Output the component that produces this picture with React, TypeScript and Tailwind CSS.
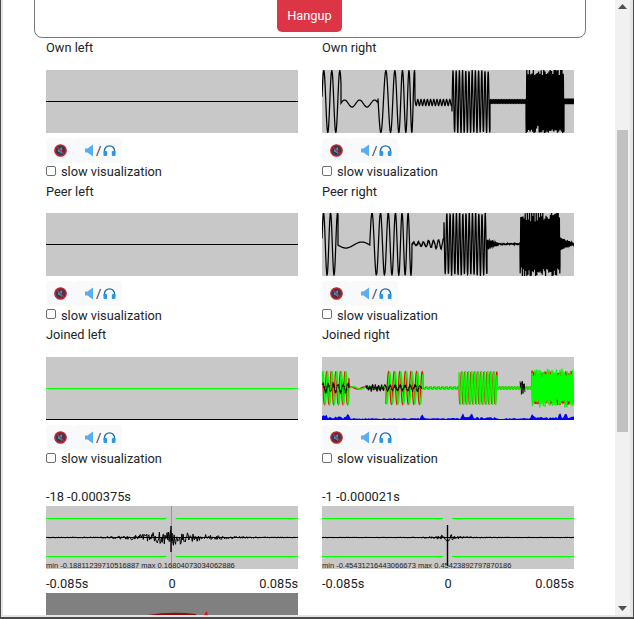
import type { ReactNode } from 'react'

type Seg = { from: number; to: number; amp: number; period: number; mid?: number; noise?: number; endAmp?: number; endPeriod?: number; reset?: boolean }

function rng(seed: number) {
  let s = seed
  return () => {
    s = (s * 16807) % 2147483647
    return s / 2147483647
  }
}

// sample the segments into a polyline, like the canvas does
function wave(segs: Seg[], center: number, seed: number, startPhase = 0, step = 0.2) {
  const r = rng(seed)
  const pts: string[] = []
  let phase = startPhase
  for (const seg of segs) {
    if (seg.reset) phase = 0
    for (let x = seg.from; x < seg.to; x += step) {
      const t = (x - seg.from) / (seg.to - seg.from)
      const period = seg.period + ((seg.endPeriod ?? seg.period) - seg.period) * t
      const amp = seg.amp + ((seg.endAmp ?? seg.amp) - seg.amp) * t
      phase += (step / period) * Math.PI * 2
      const n = seg.noise ? (r() - 0.5) * seg.noise : 0
      const y = center + (seg.mid ?? 0) - Math.sin(phase) * amp + n
      pts.push(`${x.toFixed(1)},${y.toFixed(1)}`)
    }
  }
  return pts.join(' ')
}

const ownRight: Seg[] = [
  { from: 0, to: 19, amp: 31, period: 8 },
  { from: 19, to: 56, amp: 3.5, period: 15, mid: 2, reset: true },
  { from: 56, to: 93, amp: 31, period: 11, endPeriod: 5 },
  { from: 93, to: 130, amp: 3, period: 3.2, mid: 1 },
  { from: 130, to: 168, amp: 31, period: 3.2, noise: 2 },
  { from: 168, to: 204, amp: 2, period: 1.6 },
  { from: 204, to: 242, amp: 31, period: 1.3, noise: 8 },
  { from: 242, to: 252, amp: 3, period: 0.5 },
]

const peerRight: Seg[] = [
  { from: 0, to: 16, amp: 31, period: 7 },
  { from: 16, to: 48, amp: -3, period: 32, mid: 1, reset: true },
  { from: 48, to: 90, amp: 31, period: 9, endPeriod: 5.5, noise: 1, reset: true },
  { from: 90, to: 122, amp: 1, period: 5, endAmp: 5, noise: 1.5 },
  { from: 122, to: 165, amp: 31, period: 3.2, noise: 3 },
  { from: 165, to: 176, amp: 5, endAmp: 1, period: 1.6, noise: 2 },
  { from: 176, to: 198, amp: 0.3, period: 4, noise: 0.8 },
  { from: 198, to: 238, amp: 31, period: 1.1, noise: 12 },
  { from: 238, to: 252, amp: 6, endAmp: 0.5, period: 1.4, noise: 1 },
]

const joined = (a: number, b: number, c: number, d: number, n: number): Seg[] => [
  { from: 0, to: 27, amp: a, period: 4.6 },
  { from: 27, to: 64, amp: b, period: 14 },
  { from: 64, to: 101, amp: a, period: 5.6 },
  { from: 101, to: 137, amp: b, period: 4 },
  { from: 137, to: 175, amp: a, period: c },
  { from: 175, to: 210, amp: b, period: 3 },
  { from: 210, to: 251, amp: a, period: d, noise: n },
]

const blackLow: Seg[] = [{ from: 0, to: 27, amp: 4, period: 5, noise: 4 }]
const blackHigh: Seg[] = [
  { from: 44, to: 62, amp: 1.5, period: 3, noise: 5 },
  { from: 62, to: 100, amp: 2.5, period: 5, noise: 3 },
]
const blackBlip: Seg[] = [{ from: 198, to: 203, amp: 2, period: 2, noise: 11 }]

function blueFill() {
  const r = rng(77)
  const pts = ['0,63']
  for (let x = 0; x <= 252; x += 1.5) {
    const spike = [1, 4, 26, 100, 141, 150, 210, 238, 244].reduce((h, s) => Math.max(h, 4.5 - Math.abs(x - s) * 2), 0)
    const zone = x < 30 || (x > 137 && x < 175) || x > 210 ? 2.5 : 1
    pts.push(`${x},${(62 - r() * zone - spike).toFixed(1)}`)
  }
  pts.push('252,63')
  return pts.join(' ')
}

function xcorr(spread: number, amp: number, seed: number, at: number) {
  const r = rng(seed)
  const pts: string[] = []
  for (let x = 0; x <= 252; x += 0.7) {
    const d = Math.abs(x - at)
    const a = amp * Math.exp(-d / spread) + 0.2
    pts.push(`${x.toFixed(1)},${(31.5 - (r() - 0.5) * 2 * a).toFixed(1)}`)
  }
  return pts.join(' ')
}

function Scope({ children }: { children?: ReactNode }) {
  return (
    <svg width="252" height="63" viewBox="0 0 252 63" className="block bg-[#c8c8c8]">
      {children}
    </svg>
  )
}

function Line({ y, color = '#000' }: { y: number; color?: string }) {
  return <line x1="0" x2="252" y1={y} y2={y} stroke={color} strokeWidth="1" />
}

function AudioButtons() {
  return (
    <div className="mt-[5px] flex h-[25px]">
      <button className="flex w-[28px] items-center justify-center rounded-[4px] bg-[#f8f9fa]">
        <svg width="13" height="13" viewBox="0 0 13 13">
          <circle cx="6.5" cy="6.5" r="5.7" fill="#3b3b46" stroke="#d0232f" strokeWidth="1.3" />
          <path d="M4 5h1.4L8 3v7L5.4 8H4z" fill="#3f8fd8" />
          <line x1="2.5" y1="2.5" x2="10.5" y2="10.5" stroke="#d0232f" strokeWidth="1.2" />
        </svg>
      </button>
      <button className="flex w-[48px] items-center pl-[11px] rounded-[4px] bg-[#f8f9fa]">
        <svg width="8" height="13" viewBox="0 0 8 13">
          <path d="M0 4.5h2.5L8 .5v12L2.5 8.5H0z" fill="#5aaef0" />
        </svg>
        <span className="ml-[3px] mr-[2px] text-[13px] leading-none text-[#333]">/</span>
        <svg width="13" height="13" viewBox="0 0 14 13">
          <path d="M1.5 9V7a5.5 5.5 0 0 1 11 0v2" fill="none" stroke="#1d6fa8" strokeWidth="1.5" />
          <rect x="0.5" y="7" width="4" height="5.5" rx="1.2" fill="#2f97e0" />
          <rect x="9.5" y="7" width="4" height="5.5" rx="1.2" fill="#2f97e0" />
        </svg>
      </button>
    </div>
  )
}

function Channel({ title, children }: { title: string; children: ReactNode }) {
  return (
    <div>
      <div className="h-[19.4px] pt-[0.4px] leading-[19px]">{title}</div>
      <div className="mt-[12.6px]">{children}</div>
      <AudioButtons />
      <label className="flex h-[18.5px] items-center">
        <input type="checkbox" className="mb-[3px] h-[10px] w-[10px] appearance-none rounded-[2px] border border-[#6f6f6f] bg-white" />
        <span className="ml-[5px]">slow visualization</span>
      </label>
    </div>
  )
}

function Correlation({ title, info, at, spread, amp, seed, marker }: { title: string; info: string; at: number; spread: number; amp: number; seed: number; marker?: boolean }) {
  const gapA = at - 5
  const gapB = at + 4
  return (
    <div>
      <div className="h-[19px] leading-[19px]">{title}</div>
      <div className="relative h-[63px] w-[252px] overflow-hidden">
        <Scope>
          <line x1="0" x2={gapA} y1="12.5" y2="12.5" stroke="#00ff00" strokeWidth="1.2" />
          <line x1={gapB} x2="252" y1="12.5" y2="12.5" stroke="#00ff00" strokeWidth="1.2" />
          <line x1="0" x2={gapA} y1="50.5" y2="50.5" stroke="#00ff00" strokeWidth="1.2" />
          <line x1={gapB} x2="252" y1="50.5" y2="50.5" stroke="#00ff00" strokeWidth="1.2" />
          {marker && <line x1={at} x2={at} y1="0" y2="63" stroke="#00ff00" />}
          <Line y={31.5} />
          <polyline points={xcorr(spread, amp, seed, at)} fill="none" stroke="#000" strokeWidth="1" />
          <line x1={at - 0.5} x2={at - 0.5} y1={marker ? 20 : 19} y2={marker ? 46 : 60} stroke="#000" strokeWidth="1.4" />
        </Scope>
        <div className="absolute bottom-[-1px] left-0 whitespace-nowrap font-['Liberation_Sans',sans-serif] text-[7.5px] leading-[9px] text-[#222]">{info}</div>
      </div>
      <div className="mt-[5px] grid h-[19px] grid-cols-3 leading-[19px]">
        <span>-0.085s</span>
        <span className="text-center">0</span>
        <span className="text-right">0.085s</span>
      </div>
    </div>
  )
}

export default function App() {
  return (
    <div className="flex h-[619px] w-[634px] overflow-hidden border-x border-b-2 border-[#4a4a4a] bg-white font-['Roboto',sans-serif] text-[12.8px] text-[#212529]">
      <div className="flex min-w-0 flex-1 border-b-2 border-l-2 border-r-[3px] border-[#e6e6e6]">
        <main className="min-w-0 flex-1 overflow-hidden">
          <div className="ml-[31px] mr-[29px] mt-[-10px] flex h-[48px] justify-center rounded-b-[8px] border border-[#777] bg-white">
            <button className="mr-[1px] h-[41px] w-[65px] rounded-[5px] bg-[#dc3545] pt-[9px] text-white">Hangup</button>
          </div>
          <div className="ml-[43px] mt-[-0.2px] grid w-[528px] grid-cols-[252px_252px] gap-x-[24px]">
            <Channel title="Own left">
              <Scope><Line y={31.5} /></Scope>
            </Channel>
            <Channel title="Own right">
              <Scope>
                <polyline points={wave(ownRight, 31.5, 11)} fill="none" stroke="#000" strokeWidth="1.25" />
              </Scope>
            </Channel>
            <Channel title="Peer left">
              <Scope><Line y={31.5} /></Scope>
            </Channel>
            <Channel title="Peer right">
              <Scope>
                <polyline points={wave(peerRight, 31, 23)} fill="none" stroke="#000" strokeWidth="1.25" />
              </Scope>
            </Channel>
            <Channel title="Joined left">
              <Scope>
                <Line y={31.5} color="#00ff00" />
                <Line y={62.5} />
              </Scope>
            </Channel>
            <Channel title="Joined right">
              <Scope>
                <polyline points={blueFill()} fill="#0000ff" />
                <polyline points={wave(joined(16, 1, 3.2, 1.3, 3), 31, 37, 1.2)} fill="none" stroke="#ff0000" strokeWidth="1.4" />
                <polyline points={wave(joined(16, 1.2, 3.2, 0.9, 8), 31, 41)} fill="none" stroke="#00ff00" strokeWidth="1.4" />
                <polyline points={wave(blackLow, 31, 31)} fill="none" stroke="#000" strokeWidth="0.7" />
                <polyline points={wave(blackHigh, 31, 43)} fill="none" stroke="#000" strokeWidth="0.8" />
                <polyline points={wave(blackBlip, 31, 47)} fill="none" stroke="#000" strokeWidth="0.8" />
              </Scope>
            </Channel>
            <div className="col-span-2 h-[18.5px]" />
            <Correlation title="-18 -0.000375s" info="min -0.18811239710516887 max 0.16804073034062886" at={125.5} spread={28} amp={9} seed={5} marker />
            <Correlation title="-1 -0.000021s" info="min -0.45431216443066673 max 0.45423892797870186" at={126} spread={12} amp={4} seed={9} />
            <svg width="252" height="63" viewBox="0 0 252 63" className="block bg-[#808080]">
              <path d="M101 22Q125 18 150 21L150 24L101 24Z" fill="#8a0f0f" />
              <path d="M158 22l3-4 1 6h-3z" fill="#ff0000" />
            </svg>
          </div>
        </main>
        <div className="flex w-[15px] shrink-0 flex-col items-center bg-[#f1f1f1]">
          <svg width="9" height="5" viewBox="0 0 9 5" className="mt-[4px] shrink-0">
            <polygon points="4.5,0 9,5 0,5" fill="#505050" />
          </svg>
          <div className="mt-[121px] h-[302px] w-[11px] shrink-0 bg-[#c1c1c1]" />
          <svg width="9" height="5" viewBox="0 0 9 5" className="mt-auto mb-[4px] shrink-0">
            <polygon points="0,0 9,0 4.5,5" fill="#505050" />
          </svg>
        </div>
      </div>
    </div>
  )
}
